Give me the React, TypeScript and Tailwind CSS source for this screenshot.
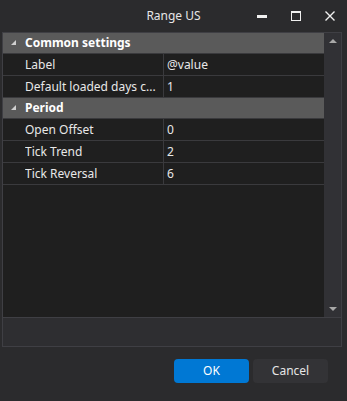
import React from "react";

const font = { fontFamily: '"Noto Sans", "Open Sans", sans-serif' };

function Tri() {
  return (
    <svg width="6" height="6" viewBox="0 0 6 6" className="shrink-0">
      <polygon points="5,0 5,5 0,5" fill="#d0d0d0" />
    </svg>
  );
}

function Category({ label }: { label: string }) {
  return (
    <div className="flex h-[21px] items-center border-b border-[#3a3a3d] bg-[#5a5a5a] pl-[8px]">
      <Tri />
      <span className="ml-[8px] text-[12px] font-bold text-white">{label}</span>
    </div>
  );
}

function Prop({ label, value }: { label: string; value: string }) {
  return (
    <div className="flex h-[22px] border-b border-[#3a3a3d] text-[12px] text-[#e8e8e8]">
      <div className="flex w-[161px] shrink-0 items-center border-r border-[#3a3a3d] pl-[22px] pr-[2px]">
        <span className="truncate">{label}</span>
      </div>
      <div className="flex flex-1 items-center pl-[3px]">
        <span className="truncate">{value}</span>
      </div>
    </div>
  );
}

export default function App() {
  return (
    <div className="flex h-[401px] w-[347px] flex-col bg-[#2b2b2d]" style={font}>
      <div className="grid h-[32px] grid-cols-[1fr_auto_1fr] items-center">
        <div />
        <div className="text-[12px] text-[#e6e6e6]">Range US</div>
        <div className="flex justify-end">
          <div className="flex h-[32px] w-[34px] items-center justify-center">
            <div className="h-[3px] w-[10px] bg-[#f0f0f0]" />
          </div>
          <div className="flex h-[32px] w-[34px] items-center justify-center">
            <div className="h-[10px] w-[10px] border border-t-[2px] border-[#f0f0f0]" />
          </div>
          <div className="flex h-[32px] w-[34px] items-center justify-center">
            <svg width="10" height="10" viewBox="0 0 10 10">
              <path d="M0.5 0.5 L9.5 9.5 M9.5 0.5 L0.5 9.5" stroke="#f0f0f0" strokeWidth="1.4" />
            </svg>
          </div>
        </div>
      </div>

      <div className="ml-[2px] flex h-[315px] w-[340px] flex-col border border-[#3f3f44]">
        <div className="flex h-[285px] border-b border-[#3f3f44]">
          <div className="flex-1 bg-[#1f1f1f]">
            <Category label="Common settings" />
            <Prop label="Label" value="@value" />
            <Prop label="Default loaded days c..." value="1" />
            <Category label="Period" />
            <Prop label="Open Offset" value="0" />
            <Prop label="Tick Trend" value="2" />
            <Prop label="Tick Reversal" value="6" />
          </div>
          <div className="flex w-[17px] flex-col items-center justify-between bg-[#313135] py-[6px]">
            <svg width="8" height="4" viewBox="0 0 8 4">
              <polygon points="4,0 8,4 0,4" fill="#a8a8a8" />
            </svg>
            <svg width="8" height="4" viewBox="0 0 8 4">
              <polygon points="0,0 8,0 4,4" fill="#a8a8a8" />
            </svg>
          </div>
        </div>
        <div className="flex-1 bg-[#2e2e31]" />
      </div>

      <div className="mt-[12px] flex justify-end gap-[4px] pr-[19px]">
        <button className="h-[24px] w-[75px] rounded-[4px] bg-[#0078d4] text-[12px] text-white">
          OK
        </button>
        <button className="h-[24px] w-[75px] rounded-[4px] bg-[#333336] text-[12px] text-[#e6e6e6]">
          Cancel
        </button>
      </div>
    </div>
  );
}
